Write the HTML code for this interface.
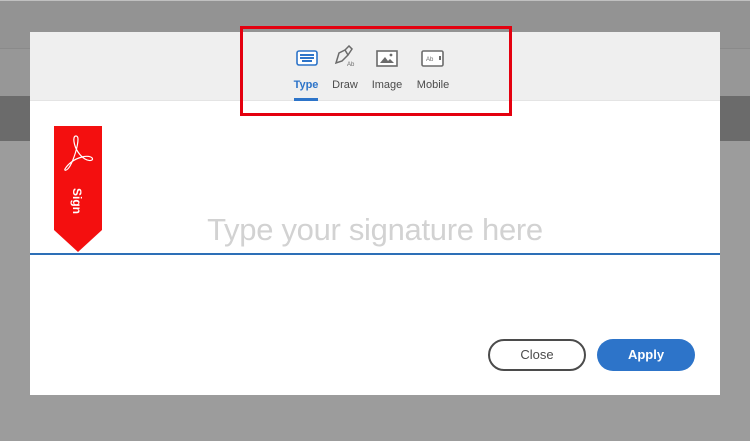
<!DOCTYPE html>
<html><head><style>
*{margin:0;padding:0;box-sizing:border-box}
body{width:750px;height:441px;overflow:hidden;position:relative;background:#9c9c9c;font-family:"Liberation Sans",sans-serif}
.b{position:absolute;left:0;width:750px}
.modal{position:absolute;left:30px;top:32px;width:690px;height:363px;background:#fff}
.hdr{position:absolute;left:0;top:0;width:690px;height:69px;background:#efefef;border-bottom:1px solid #e4e4e4}
.lab{position:absolute;top:47px;font-size:11px;color:#4b4b4b;transform:translateX(-50%)}
.red{position:absolute;left:240px;top:26px;width:272px;height:90px;border:3px solid #e4000f}
.btn{position:absolute;top:307px;height:32px;width:98px;border-radius:16px;font-size:13px;text-align:center;line-height:28px}
</style></head><body>
<div class="b" style="top:0;height:48px;background:#939393;border-top:1px solid #c0c0c0"></div>
<div class="b" style="top:48px;height:48px;background:#979797;border-top:1px solid #8a8a8a"></div>
<div class="b" style="top:96px;height:45px;background:#6b6b6b"></div>
<div class="modal">
 <div class="hdr">
  <svg style="position:absolute;left:266px;top:18px" width="22" height="16" viewBox="0 0 22 16"><rect x="1" y="1" width="20" height="14" rx="2" fill="#fff" stroke="#2d74c9" stroke-width="1.6"/><g fill="#2d74c9"><rect x="4" y="4" width="14" height="2"/><rect x="4" y="7" width="14" height="2"/><rect x="6" y="10" width="10" height="2"/></g></svg>
  <svg style="position:absolute;left:303px;top:13px" width="24" height="22" viewBox="0 0 24 22"><path d="M3 18 L6 8 L12 5 L15 10 L9 16 Z M6 8 L3 18 M12 5 L16 1 L19 4 L15 10" fill="none" stroke="#6b6b6b" stroke-width="1.5"/><text x="14" y="21" font-size="6" fill="#6b6b6b" font-family="Liberation Sans">Ab</text></svg>
  <svg style="position:absolute;left:346px;top:18px" width="22" height="17" viewBox="0 0 22 17"><rect x="1" y="1" width="20" height="15" fill="#fff" stroke="#6b6b6b" stroke-width="1.6"/><path d="M4 13 L9 7 L12 11 L14 9 L18 13 Z" fill="#6b6b6b"/><circle cx="15" cy="5" r="1.4" fill="#6b6b6b"/></svg>
  <svg style="position:absolute;left:391px;top:18px" width="24" height="17" viewBox="0 0 24 17"><rect x="1" y="1" width="21" height="15" rx="1.5" fill="#fff" stroke="#6b6b6b" stroke-width="1.6"/><text x="5" y="11" font-size="6" fill="#6b6b6b" font-family="Liberation Sans">Ab</text><rect x="18" y="6" width="2" height="4" fill="#6b6b6b"/></svg>
  <div class="lab" style="left:276px;color:#2d74c9;font-weight:bold">Type</div>
  <div class="lab" style="left:315px">Draw</div>
  <div class="lab" style="left:357px">Image</div>
  <div class="lab" style="left:403px">Mobile</div>
  <div style="position:absolute;left:264px;top:66px;width:24px;height:3px;background:#2d74c9"></div>
 </div>
 <div style="position:absolute;left:0;top:180px;width:690px;text-align:center;font-size:31px;color:#d2d2d2;letter-spacing:-0.3px">Type your signature here</div>
 <div style="position:absolute;left:0;top:221px;width:690px;height:2px;background:#2d6fb7"></div>
 <svg style="position:absolute;left:24px;top:94px" width="48" height="128" viewBox="0 0 48 128"><path d="M0 0 H48 V104 L24 126 L0 104 Z" fill="#f40f0f"/><path d="M22 10 C18 10 20 20 24 26 C28 32 34 36 38 34 C40 32 36 29 28 31 C20 33 14 38 11 43 C10 45 13 45 16 40 C20 33 24 20 24 13 C24 11 23 10 22 10Z" fill="none" stroke="#fff" stroke-width="1.2"/><text x="0" y="0" transform="translate(19,62) rotate(90)" fill="#fff" font-size="12" font-weight="bold" font-family="Liberation Sans">Sign</text></svg>
 <div class="btn" style="left:458px;border:2px solid #4b4b4b;color:#4b4b4b">Close</div>
 <div class="btn" style="left:567px;background:#2d74c9;color:#fff;font-weight:bold;line-height:32px">Apply</div>
</div>
<div class="red"></div>
</body></html>
